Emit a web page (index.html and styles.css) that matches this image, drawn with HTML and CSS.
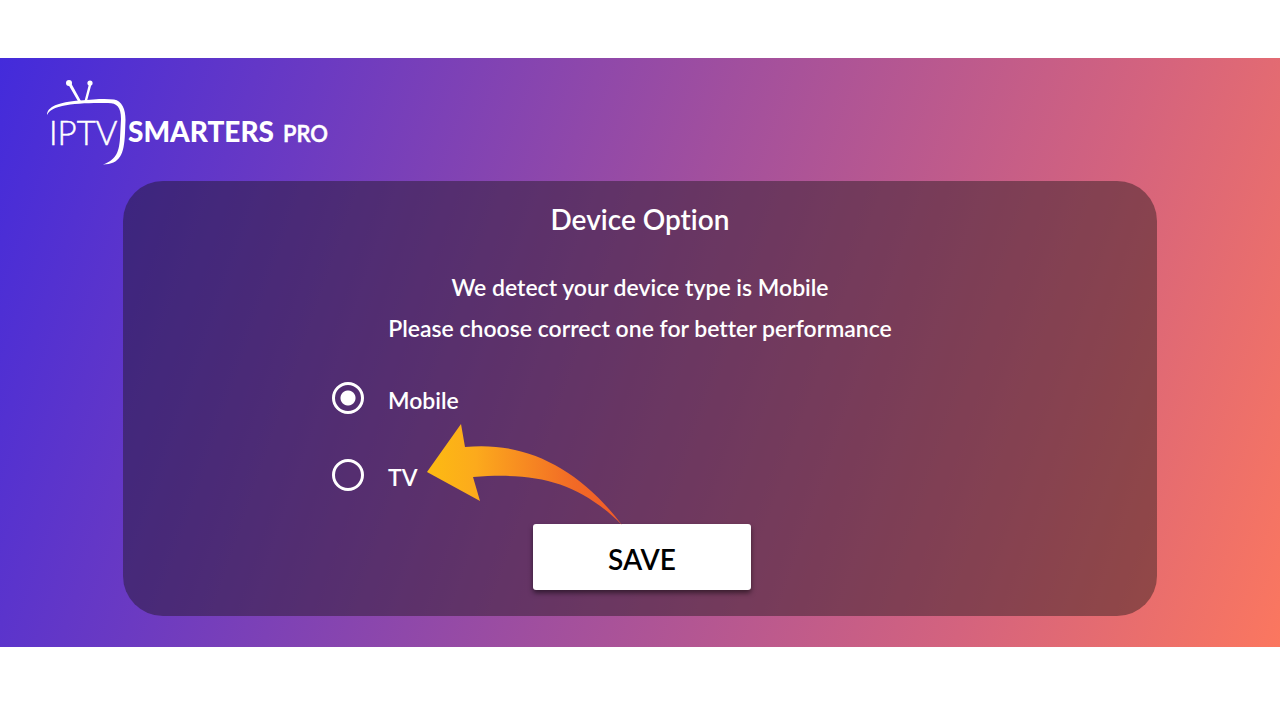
FILE: index.html
```html
<!DOCTYPE html>
<html lang="en">
<head>
<meta charset="utf-8">
<meta name="viewport" content="width=device-width, initial-scale=1">
<title>IPTV Smarters Pro - Device Option</title>
<link rel="stylesheet" href="styles.css">
</head>
<body>
<main class="screen">
  <header class="header">
    <svg class="logo" viewBox="0 0 290 90" role="img" aria-label="IPTV Smarters Pro">
      <g class="logo-art">
        <circle cx="23" cy="6" r="3"/>
        <circle cx="44" cy="6" r="2.6"/>
        <path d="M22 7 L33 26 L36 26 L25 6 Z M43 7 L38 26 L40.500 26 L45.500 7 Z"/>
        <path d="M1 38 C1 30 12 25 34 23.500 C49 22 60 21.500 68 22.500 C76 24 79.500 32 79.500 43 L79 56 C78 78 74 87 57 87.500 C69 83 73 77 74 61 L75 42 C75 30 71 26 62 26 C38 26 6 26 1 38 Z"/>
      </g>
      <text class="logo-iptv" x="3" y="68">IPTV</text>
      <text class="logo-smarters" x="82" y="65">SMARTERS</text>
      <text class="logo-pro" x="237" y="65">PRO</text>
    </svg>
  </header>
  <form class="panel">
    <h1 class="title">Device Option</h1>
    <p class="message">We detect your device type is Mobile<br>Please choose correct one for better performance</p>
    <div class="options">
      <div class="option">
        <input class="radio" type="radio" name="device" id="mobile" checked>
        <label class="option-label" for="mobile">Mobile</label>
      </div>
      <div class="option">
        <input class="radio" type="radio" name="device" id="tv">
        <label class="option-label" for="tv">TV</label>
        <svg class="arrow" viewBox="0 0 196 102" aria-hidden="true">
          <defs>
            <linearGradient id="flame" x1="0" y1="0" x2="1" y2="0">
              <stop offset="0" stop-color="#fdbb12"/>
              <stop offset="0.25" stop-color="#fcaa1c"/>
              <stop offset="0.75" stop-color="#f26a26"/>
              <stop offset="1" stop-color="#f15a29"/>
            </linearGradient>
          </defs>
          <path fill="url(#flame)" d="M0 48 L34 0 L38 23 C98 17 152 44 195 101 C152 58 111 48 46 53 L53 77 Z"/>
        </svg>
      </div>
    </div>
    <button class="save" type="button">SAVE</button>
  </form>
</main>
</body>
</html>
```
FILE: styles.css
```css
* {
  box-sizing: border-box;
}

body {
  margin: 0;
  padding: 58px 0 72px;
  background: #fff;
  font-family: Lato, "Open Sans", sans-serif;
  font-variant-ligatures: none;
}

.screen {
  padding-bottom: 31px;
  background: linear-gradient(109deg, #432bdb 0%, #6b3ac2 22%, #a14f9e 50%, #d4637e 78%, #fb775f 100%);
}

.header {
  padding: 19px 46px 14px;
}

.logo {
  display: block;
  width: 290px;
  height: 90px;
}

.logo-art,
.logo text {
  fill: #fff;
}

.logo-iptv {
  font-size: 33px;
  font-weight: 300;
  stroke: #fff;
  stroke-width: 0.5px;
}

.logo-smarters {
  font-size: 28px;
  font-weight: 900;
}

.logo-pro {
  font-size: 22px;
  font-weight: 600;
  stroke: #fff;
  stroke-width: 0.5px;
}

.panel {
  display: flex;
  flex-direction: column;
  align-items: center;
  margin: 0 123px;
  padding: 18px 0 26px;
  border-radius: 40px;
  background: rgba(24, 20, 20, 0.42);
  color: #fff;
}

.title {
  margin: 0;
  font-size: 28px;
  font-weight: 600;
  line-height: 40px;
}

.message {
  margin: 28px 0 0;
  font-size: 23px;
  font-weight: 600;
  line-height: 41px;
  text-align: center;
}

.options {
  display: flex;
  flex-direction: column;
  gap: 37px;
  width: 616px;
  max-width: 100%;
  margin-top: 29px;
}

.option {
  position: relative;
  display: flex;
  align-items: center;
  gap: 24px;
  height: 40px;
}

.option-label {
  padding-top: 4px;
  font-size: 23px;
  font-weight: 600;
}

.radio {
  appearance: none;
  width: 32px;
  height: 32px;
  margin: 0;
  border: 3px solid #fff;
  border-radius: 50%;
}

.radio:checked {
  background: radial-gradient(circle, #fff 7px, transparent 8px);
}

.arrow {
  position: absolute;
  left: 95px;
  top: -31px;
  z-index: 1;
  width: 196px;
  height: 102px;
}

.save {
  width: 218px;
  height: 66px;
  margin: 29px 0 0 4px;
  padding: 4px 0 0;
  border: 0;
  border-radius: 3px;
  background: #fff;
  box-shadow: 0 3px 5px rgba(0, 0, 0, 0.5);
  color: #000;
  font-family: inherit;
  font-size: 28px;
  font-weight: 600;
}
```
